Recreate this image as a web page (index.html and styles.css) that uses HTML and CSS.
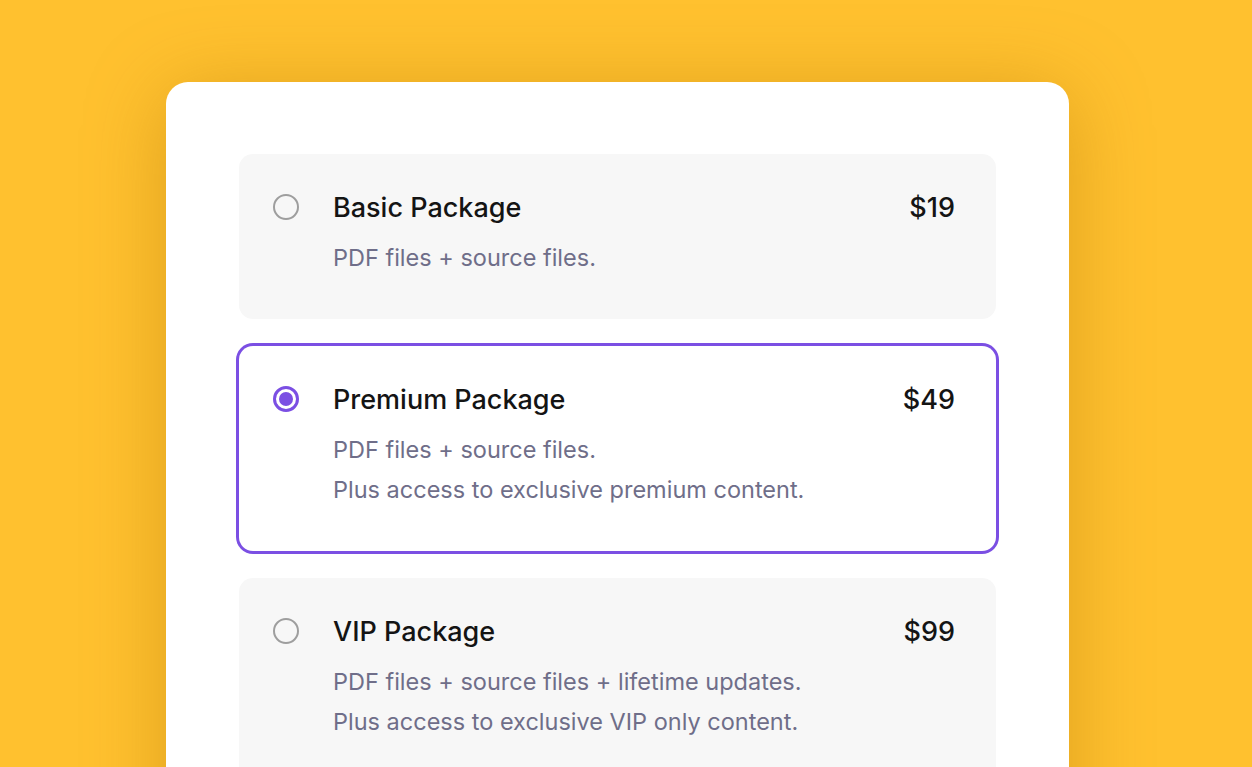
FILE: index.html
```html
<!DOCTYPE html>
<html lang="en">
<head>
    <meta charset="UTF-8">
    <meta name="viewport" content="width=device-width, initial-scale=1.0">
    <title>Choose a package</title>
    <link rel="stylesheet" href="styles.css">
</head>
<body>
<div class="page">
    <div class="card">
        <label class="option">
            <input type="radio" name="package" value="basic">
            <div class="option-body">
                <div class="option-head">
                    <span class="option-title">Basic Package</span>
                    <span class="option-price">$19</span>
                </div>
                <p class="option-desc">PDF files + source files.</p>
            </div>
        </label>
        <label class="option">
            <input type="radio" name="package" value="premium" checked>
            <div class="option-body">
                <div class="option-head">
                    <span class="option-title">Premium Package</span>
                    <span class="option-price">$49</span>
                </div>
                <p class="option-desc">PDF files + source files.</p>
                <p class="option-desc">Plus access to exclusive premium content.</p>
            </div>
        </label>
        <label class="option">
            <input type="radio" name="package" value="vip">
            <div class="option-body">
                <div class="option-head">
                    <span class="option-title">VIP Package</span>
                    <span class="option-price">$99</span>
                </div>
                <p class="option-desc">PDF files + source files + lifetime updates.</p>
                <p class="option-desc">Plus access to exclusive VIP only content.</p>
            </div>
        </label>
    </div>
</div>
</body>
</html>
```

FILE: styles.css
```css
:root {
    --bg-page: #ffc12f;
    --bg-card: #ffffff;
    --bg-option: #f7f7f7;
    --color-title: #141414;
    --color-desc: #6f6e89;
    --color-accent: #7b4fe3;
    --color-radio: #9e9e9e;
}

* {
    box-sizing: border-box;
    margin: 0;
    padding: 0;
}

html, body {
    height: 100%;
    overflow: hidden;
}

body {
    background: var(--bg-page);
    font-family: 'Inter', 'Liberation Sans', sans-serif;
}

.page {
    padding: 82px 0 0 166px;
}

.card {
    width: 903px;
    min-height: 700px;
    padding: 72px 73px;
    border-radius: 22px;
    background: var(--bg-card);
    box-shadow: 0 10px 80px rgba(170, 110, 0, 0.4);
    display: flex;
    flex-direction: column;
    gap: 27px;
}

.option {
    display: flex;
    align-items: flex-start;
    gap: 34px;
    padding: 33px 41px 41px 34px;
    border-radius: 14px;
    background: var(--bg-option);
    cursor: pointer;
}

.option:has(input:checked) {
    background: var(--bg-card);
    box-shadow: 0 0 0 3px var(--color-accent);
}

.option input[type="radio"] {
    appearance: none;
    flex: none;
    width: 26px;
    height: 26px;
    margin-top: 7px;
    border: 2px solid var(--color-radio);
    border-radius: 50%;
    background: transparent;
    position: relative;
}

.option input[type="radio"]:checked {
    border: 3px solid var(--color-accent);
}

.option input[type="radio"]:checked::after {
    content: '';
    position: absolute;
    top: 3px;
    left: 3px;
    width: 14px;
    height: 14px;
    border-radius: 50%;
    background: var(--color-accent);
}

.option-body {
    flex: 1;
}

.option-head {
    display: flex;
    justify-content: space-between;
    align-items: center;
    height: 40px;
    margin-bottom: 11px;
}

.option-title,
.option-price {
    font-size: 27px;
    font-weight: 500;
    color: var(--color-title);
}

.option-desc {
    font-size: 23.5px;
    line-height: 40px;
    color: var(--color-desc);
}
```
